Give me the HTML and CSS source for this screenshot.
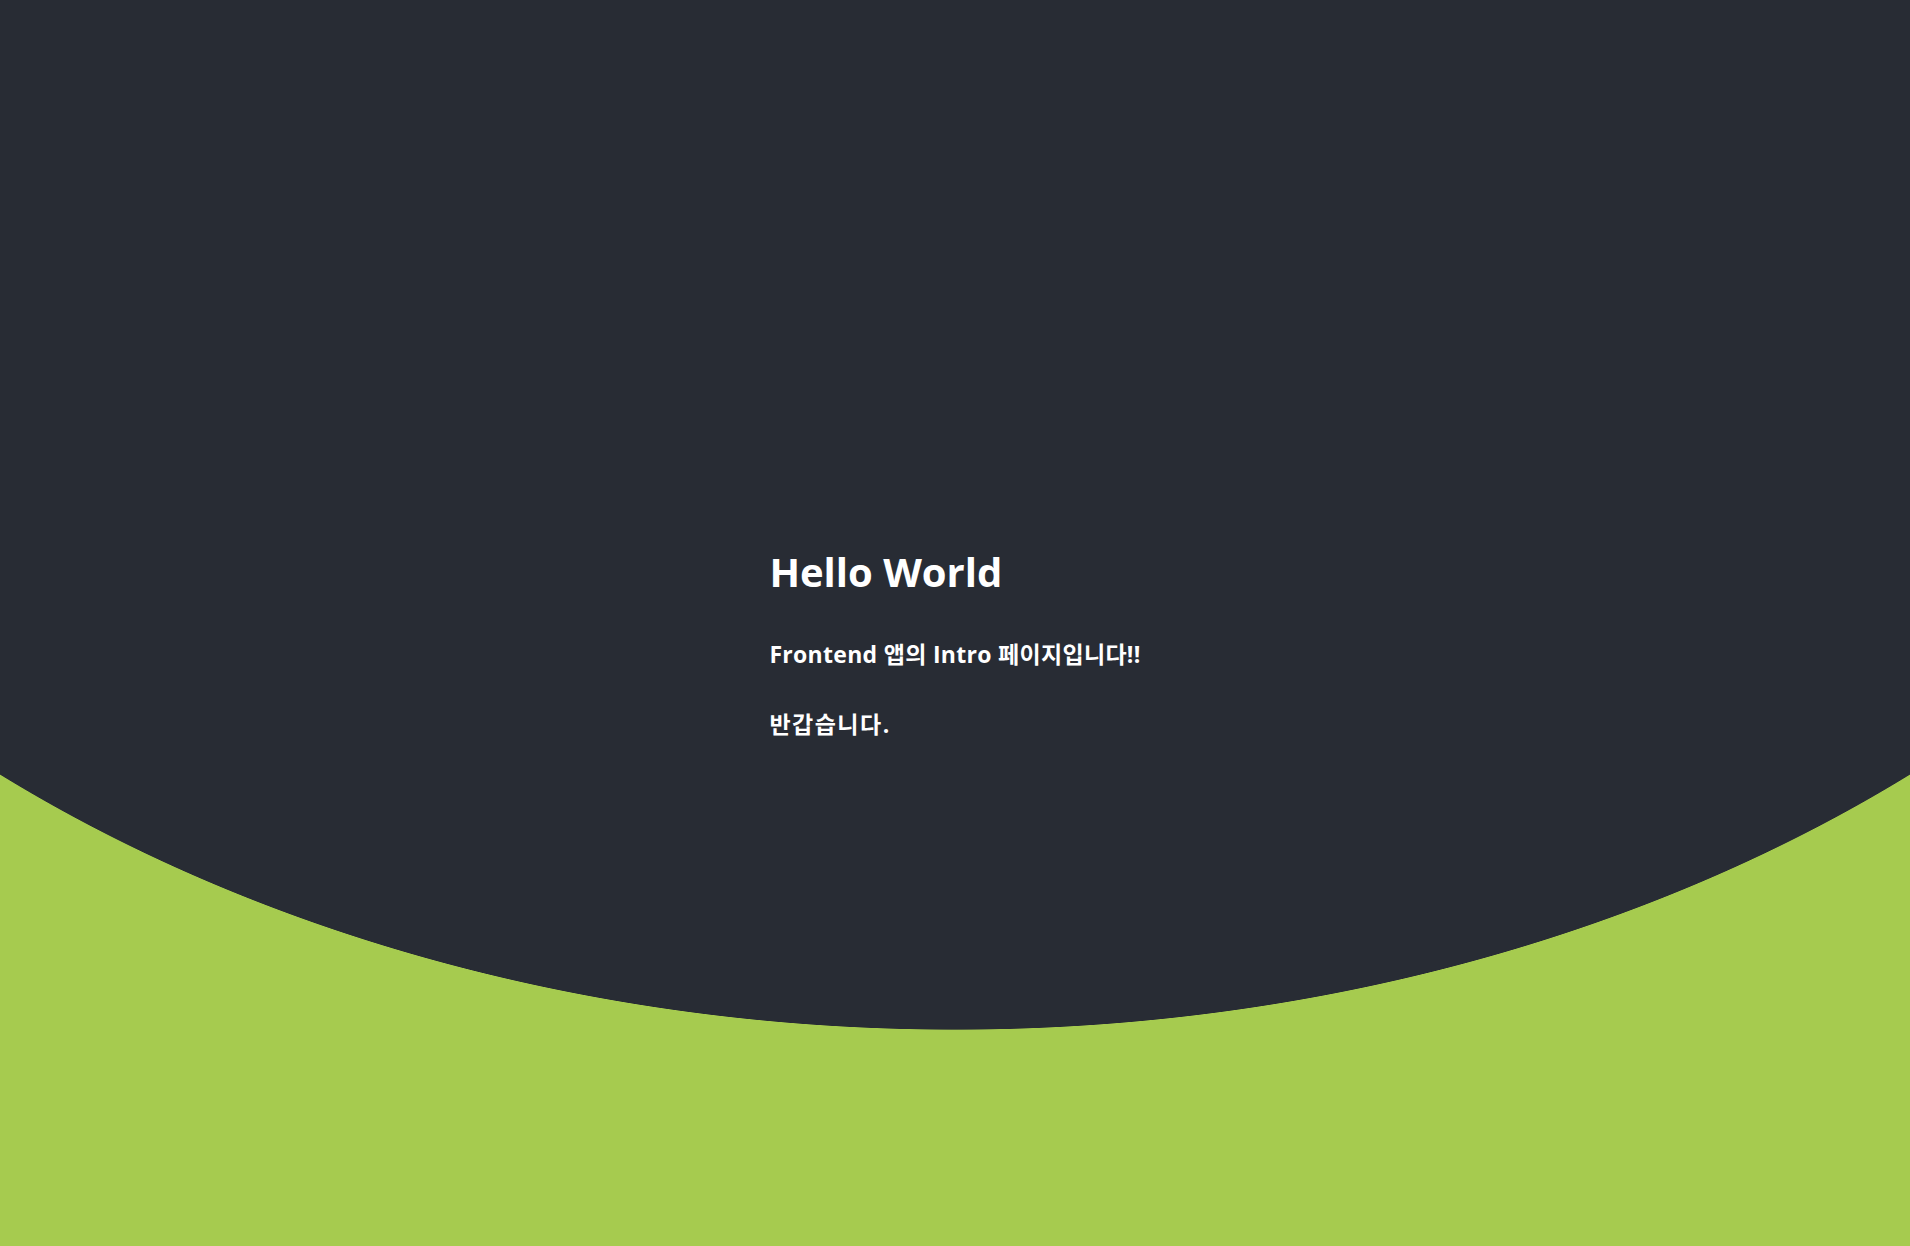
FILE: index.html
```html
<!DOCTYPE html>
<html lang="ko">
<head>
<meta charset="utf-8">
<title>Intro</title>
<link rel="stylesheet" href="styles.css">
</head>
<body>
<main class="intro">
  <div class="intro-content">
    <h1 class="intro-title">Hello World</h1>
    <h3 class="intro-subtitle">Frontend 앱의 Intro 페이지입니다!!</h3>
    <p class="intro-greeting">반갑습니다.</p>
  </div>
</main>
</body>
</html>
```

FILE: styles.css
```css
html, body {
  margin: 0;
  padding: 0;
  height: 100%;
}

body {
  background-color: #a6cb4f;
  background-image: radial-gradient(1500px 1114px at 50% -84px, #282c34 calc(100% - 1px), #a6cb4f 100%);
  background-repeat: no-repeat;
  overflow: hidden;
  font-family: "Open Sans", "Noto Sans CJK KR", sans-serif;
  color: #ffffff;
}

.intro {
  display: flex;
  justify-content: center;
  padding-top: 548px;
}

.intro-content {
  display: flex;
  flex-direction: column;
  align-items: flex-start;
}

.intro-title {
  margin: 0 0 42px;
  font-size: 40px;
  line-height: 48px;
  font-weight: 700;
}

.intro-subtitle {
  margin: 0 0 38px;
  font-size: 23px;
  line-height: 32px;
  font-weight: 700;
  letter-spacing: 0.3px;
}

.intro-greeting {
  margin: 0;
  font-size: 23px;
  line-height: 32px;
  font-weight: 700;
  letter-spacing: 1.5px;
}
```
